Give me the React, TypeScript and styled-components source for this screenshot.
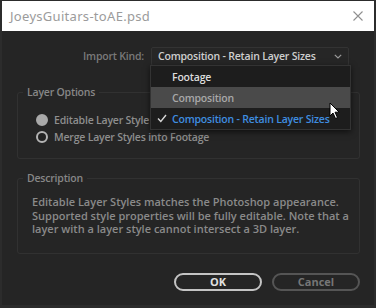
import React from "react";
import styled, { createGlobalStyle } from "styled-components";

const Global = createGlobalStyle`
  html, body { margin: 0; padding: 0; background: #1e1e1e; }
  body { font-family: "Open Sans", "Noto Sans", Arial, sans-serif; }
  * { box-sizing: border-box; }
`;

const Window = styled.div`
  position: relative;
  width: 376px;
  height: 308px;
  padding: 1px 2px 3px 2px;
  background: #2c2c2c;
  display: flex;
  flex-direction: column;
  overflow: hidden;
`;

const TitleBar = styled.div`
  height: 30px;
  background: #ffffff;
  display: flex;
  align-items: center;
  justify-content: space-between;
  padding: 0 11px 0 8px;
  flex: none;
`;

const TitleText = styled.span`
  font-family: "Noto Sans", "Open Sans", sans-serif;
  font-size: 13px;
  color: #9b9b9b;
  letter-spacing: 0.3px;
`;

const CloseIcon = styled.svg`
  width: 10px;
  height: 10px;
  display: block;
`;

const Body = styled.div`
  position: relative;
  flex: 1;
  background: #252525;
  display: flex;
  flex-direction: column;
  padding: 16px 14px 0 15px;
`;

const ImportRow = styled.div`
  display: flex;
  align-items: center;
  justify-content: flex-end;
  gap: 7px;
  padding-right: 11px;
  height: 18px;
`;

const Label = styled.span`
  font-size: 10.5px;
  font-weight: 600;
  letter-spacing: -0.2px;
  color: #7a7a7a;
`;

const Select = styled.div`
  width: 198px;
  height: 19px;
  border: 1px solid #333333;
  border-radius: 2px;
  background: #262626;
  display: flex;
  align-items: center;
  justify-content: space-between;
  padding: 0 6px 0 6px;
`;

const SelectText = styled.span`
  font-size: 10.5px;
  font-weight: 600;
  letter-spacing: -0.2px;
  color: #cfcfcf;
`;

const Group = styled.fieldset<{ $top: number; $bottom: number }>`
  margin: ${(p) => p.$top}px 0 0 0;
  border: 1px solid #313131;
  border-radius: 3px;
  padding: 0 10px ${(p) => p.$bottom}px 14px;
  min-inline-size: 0;
`;

const Legend = styled.legend`
  font-size: 10.5px;
  font-weight: 600;
  letter-spacing: -0.2px;
  color: #878787;
  padding: 0 4px;
  margin-left: -9px;
  line-height: 14px;
`;

const RadioList = styled.div`
  display: flex;
  flex-direction: column;
  padding-top: 12px;
  padding-left: 4px;
`;

const RadioRow = styled.div`
  display: flex;
  align-items: center;
  gap: 6px;
  height: 17px;
`;

const RadioDot = styled.span<{ $checked: boolean }>`
  width: 12px;
  height: 12px;
  border-radius: 50%;
  flex: none;
  background: ${(p) => (p.$checked ? "#a9a9a9" : "#222")};
  border: 2px solid ${(p) => (p.$checked ? "#a9a9a9" : "#b4b4b4")};
`;

const RadioLabel = styled.span`
  font-size: 10.5px;
  font-weight: 600;
  letter-spacing: -0.2px;
  color: #8e8e8e;
`;

const DescText = styled.p`
  margin: 10px 0 0 0;
  font-size: 11px;
  font-weight: 600;
  line-height: 13.5px;
  color: #8a8a8a;
`;

const ButtonRow = styled.div`
  display: flex;
  justify-content: flex-end;
  gap: 10px;
  margin-top: 19px;
`;

const Button = styled.div<{ $primary?: boolean }>`
  width: 88px;
  height: 18px;
  border-radius: 9px;
  border: 2px solid ${(p) => (p.$primary ? "#c4c4c4" : "#555555")};
  display: flex;
  align-items: center;
  justify-content: center;
  font-size: 11px;
  font-weight: 700;
  color: ${(p) => (p.$primary ? "#e0e0e0" : "#767676")};
`;

const Menu = styled.div`
  position: absolute;
  left: 148px;
  top: 34px;
  width: 201px;
  background: #1d1d1d;
  border: 1px solid #333;
  box-shadow: 0 2px 6px rgba(0, 0, 0, 0.6);
  display: flex;
  flex-direction: column;
  z-index: 5;
`;

const MenuItem = styled.div<{ $tone: "hi" | "plain" | "sel" }>`
  position: relative;
  height: 21px;
  display: flex;
  align-items: center;
  padding-left: 21px;
  font-size: 10.5px;
  font-weight: 600;
  letter-spacing: -0.2px;
  background: ${(p) => (p.$tone === "hi" ? "#4a4a4a" : "transparent")};
  color: ${(p) =>
    p.$tone === "hi" ? "#a8a8a8" : p.$tone === "sel" ? "#3f8ee0" : "#dcdcdc"};
`;

const Check = styled.svg`
  position: absolute;
  left: 6px;
  top: 6px;
  width: 10px;
  height: 9px;
`;

const Cursor = styled.svg`
  position: absolute;
  left: 329px;
  top: 102px;
  width: 12px;
  height: 18px;
  z-index: 10;
`;

export default function App() {
  return (
    <>
      <Global />
      <Window>
        <TitleBar>
          <TitleText>JoeysGuitars-toAE.psd</TitleText>
          <CloseIcon viewBox="0 0 10 10">
            <path d="M0.5 0.5 L9.5 9.5 M9.5 0.5 L0.5 9.5" stroke="#8f8f8f" strokeWidth="1.1" />
          </CloseIcon>
        </TitleBar>
        <Body>
          <ImportRow>
            <Label>Import Kind:</Label>
            <Select>
              <SelectText>Composition - Retain Layer Sizes</SelectText>
              <svg width="8" height="5" viewBox="0 0 8 5">
                <path d="M0.8 0.8 L4 4 L7.2 0.8" stroke="#9a9a9a" strokeWidth="1.2" fill="none" />
              </svg>
            </Select>
          </ImportRow>
          <Group $top={20} $bottom={13}>
            <Legend>Layer Options</Legend>
            <RadioList>
              <RadioRow>
                <RadioDot $checked />
                <RadioLabel>Editable Layer Style</RadioLabel>
              </RadioRow>
              <RadioRow>
                <RadioDot $checked={false} />
                <RadioLabel>Merge Layer Styles into Footage</RadioLabel>
              </RadioRow>
            </RadioList>
          </Group>
          <Group $top={12} $bottom={17}>
            <Legend>Description</Legend>
            <DescText>
              Editable Layer Styles matches the Photoshop appearance.
              <br />
              Supported style properties will be fully editable. Note that a
              <br />
              layer with a layer style cannot intersect a 3D layer.
            </DescText>
          </Group>
          <ButtonRow>
            <Button $primary>OK</Button>
            <Button>Cancel</Button>
          </ButtonRow>
          <Menu>
            <MenuItem $tone="plain">Footage</MenuItem>
            <MenuItem $tone="hi">Composition</MenuItem>
            <MenuItem $tone="sel">
              <Check viewBox="0 0 10 9">
                <path d="M1 4.5 L3.8 7.5 L9 1" stroke="#d8d8d8" strokeWidth="1.4" fill="none" />
              </Check>
              Composition - Retain Layer Sizes
            </MenuItem>
          </Menu>
        </Body>
        <Cursor viewBox="0 0 12 18">
          <path
            d="M1 1 L1 14 L4 11 L6.5 16.5 L8.5 15.6 L6 10.2 L10.2 10.2 Z"
            fill="#ffffff"
            stroke="#000000"
            strokeWidth="1"
            strokeLinejoin="round"
          />
        </Cursor>
      </Window>
    </>
  );
}
